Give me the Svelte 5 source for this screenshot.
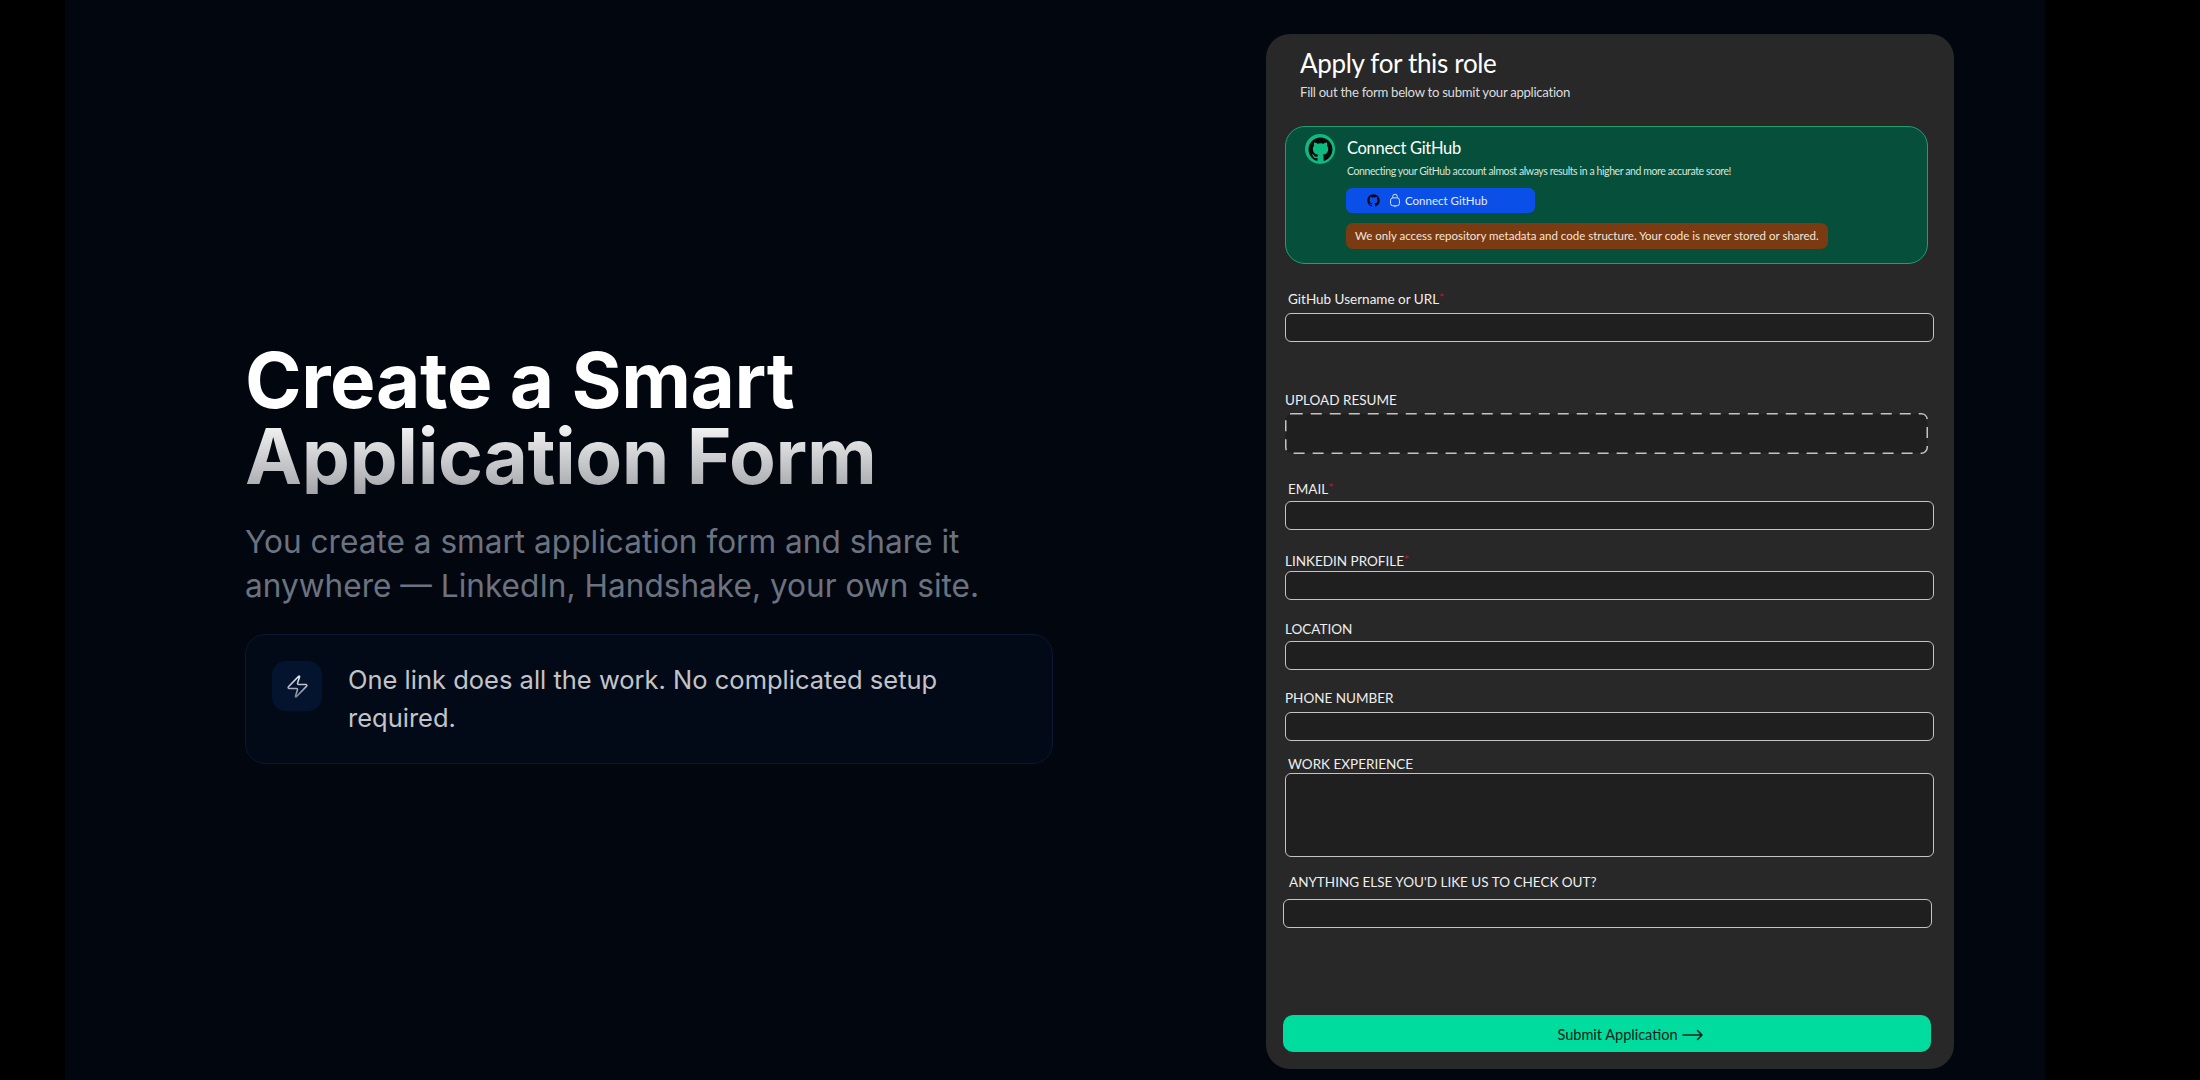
<script lang="ts">
    const fields = [
        { label: "EMAIL", required: true, cls: "inset", gap: "g-email" },
        { label: "LINKEDIN PROFILE", required: true, cls: "", gap: "g-linkedin" },
        { label: "LOCATION", required: false, cls: "", gap: "g-location" },
        { label: "PHONE NUMBER", required: false, cls: "", gap: "g-phone" },
    ];
</script>

<div class="screen">
    <main class="page">
        <section class="intro">
            <h1>Create a Smart<br />Application Form</h1>
            <p class="lead">
                You create a smart application form and share it anywhere — LinkedIn, Handshake, your own site.
            </p>
            <div class="note">
                <span class="note-icon">
                    <svg width="25" height="25" viewBox="0 0 24 24" fill="none" stroke="url(#bolt)" stroke-width="1.5" stroke-linejoin="round" stroke-linecap="round">
                        <defs>
                            <linearGradient id="bolt" x1="0" y1="0" x2="0" y2="1">
                                <stop offset="0" stop-color="#eceef2" />
                                <stop offset="1" stop-color="#7d8494" />
                            </linearGradient>
                        </defs>
                        <path d="M4 14a1 1 0 0 1-.78-1.63l9.9-10.2a.5.5 0 0 1 .86.46l-1.92 6.02A1 1 0 0 0 13 10h7a1 1 0 0 1 .78 1.63l-9.9 10.2a.5.5 0 0 1-.86-.46l1.92-6.02A1 1 0 0 0 11 14z" />
                    </svg>
                </span>
                <p>One link does all the work. No complicated setup required.</p>
            </div>
        </section>

        <aside class="panel">
            <header class="panel-head">
                <h2>Apply for this role</h2>
                <p>Fill out the form below to submit your application</p>
            </header>

            <div class="connect">
                <span class="cat">
                    <svg width="25" height="25" viewBox="0 0 24 24" fill="#060a0a">
                        <path d="M12 .5C5.65.5.5 5.65.5 12c0 5.08 3.29 9.39 7.86 10.91.58.1.79-.25.79-.56v-2.14c-3.2.7-3.87-1.36-3.87-1.36-.52-1.33-1.28-1.68-1.28-1.68-1.04-.71.08-.7.08-.7 1.16.08 1.77 1.19 1.77 1.19 1.03 1.76 2.69 1.25 3.35.96.1-.75.4-1.25.73-1.54-2.56-.29-5.25-1.28-5.25-5.69 0-1.26.45-2.28 1.19-3.09-.12-.29-.52-1.46.11-3.05 0 0 .97-.31 3.17 1.18a11 11 0 0 1 5.78 0c2.2-1.49 3.17-1.18 3.17-1.18.63 1.59.23 2.76.11 3.05.74.81 1.19 1.83 1.19 3.09 0 4.42-2.69 5.39-5.26 5.68.41.36.78 1.06.78 2.14v3.17c0 .31.21.67.8.56A11.5 11.5 0 0 0 23.5 12C23.5 5.65 18.35.5 12 .5z" />
                    </svg>
                </span>
                <div class="connect-body">
                    <h3>Connect GitHub</h3>
                    <p class="connect-sub">Connecting your GitHub account almost always results in a higher and more accurate score!</p>
                    <button class="gh-btn" type="button">
                        <svg width="13" height="13" viewBox="0 0 24 24" fill="#030818">
                            <path d="M12 .5C5.65.5.5 5.65.5 12c0 5.08 3.29 9.39 7.86 10.91.58.1.79-.25.79-.56v-2.14c-3.2.7-3.87-1.36-3.87-1.36-.52-1.33-1.28-1.68-1.28-1.68-1.04-.71.08-.7.08-.7 1.16.08 1.77 1.19 1.77 1.19 1.03 1.76 2.69 1.25 3.35.96.1-.75.4-1.25.73-1.54-2.56-.29-5.25-1.28-5.25-5.69 0-1.26.45-2.28 1.19-3.09-.12-.29-.52-1.46.11-3.05 0 0 .97-.31 3.17 1.18a11 11 0 0 1 5.78 0c2.2-1.49 3.17-1.18 3.17-1.18.63 1.59.23 2.76.11 3.05.74.81 1.19 1.83 1.19 3.09 0 4.42-2.69 5.39-5.26 5.68.41.36.78 1.06.78 2.14v3.17c0 .31.21.67.8.56A11.5 11.5 0 0 0 23.5 12C23.5 5.65 18.35.5 12 .5z" />
                        </svg>
                        <svg class="lock" width="12" height="15" viewBox="0 0 12 17" fill="none" stroke="#dbe6ff" stroke-width="1.1">
                            <rect x="1" y="5.5" width="10" height="9" rx="2.6" />
                            <path d="M3.4 5.5V4a2.6 2.6 0 0 1 5.2 0v1.5M6 14.5v1.6" />
                        </svg>
                        <span>Connect GitHub</span>
                    </button>
                    <p class="privacy">We only access repository metadata and code structure. Your code is never stored or shared.</p>
                </div>
            </div>

            <div class="field g-github">
                <label class="inset">GitHub Username or URL<em>*</em></label>
                <div class="box wide"></div>
            </div>

            <div class="field g-upload">
                <label>UPLOAD RESUME</label>
                <svg class="drop" width="643" height="41" viewBox="0 0 643 41">
                    <rect x="0.75" y="0.75" width="641.5" height="39.5" rx="6" fill="#1f1f1f" stroke="#c4c4c4" stroke-width="1.5" stroke-dasharray="11 8" />
                </svg>
            </div>

            {#each fields as f (f.label)}
                <div class="field {f.gap}">
                    <label class={f.cls}>{f.label}{#if f.required}<em>*</em>{/if}</label>
                    <div class="box wide"></div>
                </div>
            {/each}

            <div class="field g-work">
                <label class="inset">WORK EXPERIENCE</label>
                <div class="box wide area"></div>
            </div>

            <div class="field g-else">
                <label class="inset2">ANYTHING ELSE YOU'D LIKE US TO CHECK OUT?</label>
                <div class="box shifted"></div>
            </div>

            <button class="submit" type="button">
                Submit Application
                <svg width="22" height="12" viewBox="0 0 22 12" fill="none" stroke="#04201a" stroke-width="1.5" stroke-linecap="round" stroke-linejoin="round">
                    <path d="M1 6h19M15.5 1.5 20 6l-4.5 4.5" />
                </svg>
            </button>
        </aside>
    </main>
</div>

<style>
    :global(body) {
        margin: 0;
        background: #000;
    }

    .screen {
        width: 2200px;
        height: 1080px;
        overflow: hidden;
        background: #000;
    }

    .page {
        width: 1980px;
        height: 1080px;
        margin-left: 65px;
        display: flex;
        background: #02060f;
        font-family: Inter, "Liberation Sans", sans-serif;
    }

    .intro {
        width: 808px;
        margin-left: 180px;
        padding-top: 342px;
        flex-shrink: 0;
    }

    h1 {
        margin: 0;
        width: fit-content;
        font-size: 76.5px;
        line-height: 76px;
        font-weight: 700;
        letter-spacing: -0.4px;
        background: linear-gradient(180deg, #fff 0%, #fff 48%, #a3a4a9 100%);
        -webkit-background-clip: text;
        background-clip: text;
        color: transparent;
    }

    .lead {
        margin: 26px 0 0;
        width: 790px;
        font-size: 31.6px;
        line-height: 44px;
        color: #6b7280;
    }

    .note {
        margin-top: 26px;
        box-sizing: border-box;
        height: 130px;
        padding: 26px;
        display: flex;
        gap: 26px;
        border: 1px solid #0a1930;
        border-radius: 20px;
        background: #030a17;
    }

    .note-icon {
        width: 50px;
        height: 50px;
        flex-shrink: 0;
        display: flex;
        align-items: center;
        justify-content: center;
        border-radius: 14px;
        background: #04132e;
    }

    .note p {
        margin: 0;
        font-size: 25.5px;
        line-height: 38px;
        color: #c2c4ca;
    }

    .panel {
        box-sizing: border-box;
        width: 688px;
        height: 1035px;
        margin: 34px 0 0 213px;
        padding: 0 20px 0 19px;
        flex-shrink: 0;
        display: flex;
        flex-direction: column;
        border-radius: 24px;
        background: #282828;
        font-family: Lato, "Open Sans", sans-serif;
        color: #f2f2f2;
    }

    .panel-head {
        padding: 13px 0 0 15px;
        height: 79px;
        box-sizing: border-box;
    }

    h2 {
        margin: 0;
        font-size: 26px;
        line-height: 32px;
        font-weight: 400;
        letter-spacing: -0.33px;
        color: #fff;
    }

    .panel-head p {
        margin: 4px 0 0;
        font-size: 13.2px;
        line-height: 18px;
        letter-spacing: -0.3px;
        color: #dcdcdc;
    }

    .connect {
        box-sizing: border-box;
        width: 643px;
        height: 138px;
        margin-top: 13px;
        padding: 7px 0 0 19px;
        display: flex;
        gap: 12px;
        border: 1.5px solid #1f9e72;
        border-radius: 20px;
        background: #06503b;
    }

    .cat {
        width: 30px;
        height: 30px;
        flex-shrink: 0;
        display: flex;
        align-items: center;
        justify-content: center;
        border-radius: 50%;
        background: #10b981;
    }

    h3 {
        margin: 3px 0 0;
        font-size: 16.5px;
        line-height: 22px;
        font-weight: 400;
        letter-spacing: -0.3px;
        color: #fff;
    }

    .connect-sub {
        margin: 5px 0 0;
        font-size: 10.5px;
        line-height: 14px;
        letter-spacing: -0.4px;
        color: #d4e4dc;
    }

    .gh-btn {
        box-sizing: border-box;
        width: 189px;
        height: 25px;
        margin: 10px 0 0 -1px;
        padding: 0 0 0 21px;
        display: flex;
        align-items: center;
        gap: 8px;
        border: none;
        border-radius: 6px;
        background: #0a4fe8;
        color: #e3ecff;
        font: inherit;
        font-size: 11.5px;
    }

    .lock {
        margin-left: 1px;
        margin-right: -4px;
    }

    .privacy {
        box-sizing: border-box;
        width: fit-content;
        height: 26px;
        margin: 10px 0 0 -1px;
        padding: 0 9px;
        line-height: 26px;
        font-size: 11.5px;
        border-radius: 7px;
        background: #7a3a12;
        color: #f3e6dc;
        white-space: nowrap;
    }

    .field label {
        display: block;
        font-size: 13.5px;
        line-height: 18px;
        color: #efefef;
    }

    .field em {
        color: #d01020;
        font-style: normal;
        font-size: 12px;
        line-height: 12px;
        vertical-align: 2px;
    }

    label.inset {
        padding-left: 3px;
    }

    label.inset2 {
        padding-left: 4px;
    }

    .box {
        box-sizing: border-box;
        height: 29px;
        border: 1.5px solid #c4c4c4;
        border-radius: 6px;
        background: #1f1f1f;
    }

    .wide {
        width: 649px;
    }

    .area {
        height: 84px;
    }

    .shifted {
        width: 649px;
        margin-left: -2px;
    }

    .drop {
        display: block;
        margin-top: 4px;
    }

    .g-github {
        margin-top: 26px;
    }
    .g-github label {
        margin-bottom: 5px;
    }
    .g-upload {
        margin-top: 49px;
    }
    .g-email {
        margin-top: 26px;
    }
    .g-email label {
        margin-bottom: 3px;
    }
    .g-linkedin {
        margin-top: 22px;
    }
    .g-linkedin label {
        margin-bottom: 1px;
    }
    .g-location {
        margin-top: 20px;
    }
    .g-location label {
        margin-bottom: 3px;
    }
    .g-phone {
        margin-top: 19px;
    }
    .g-phone label {
        margin-bottom: 5px;
    }
    .g-work {
        margin-top: 14px;
    }
    .g-else {
        margin-top: 16px;
    }
    .g-else label {
        margin-bottom: 8px;
    }

    .submit {
        box-sizing: border-box;
        width: 648px;
        height: 37px;
        margin: auto 0 17px -2px;
        padding: 2px 0 0 48px;
        display: flex;
        align-items: center;
        justify-content: center;
        gap: 5px;
        border: none;
        border-radius: 10px;
        background: #00dc9e;
        color: #04201a;
        font: inherit;
        font-size: 14.5px;
    }
</style>
